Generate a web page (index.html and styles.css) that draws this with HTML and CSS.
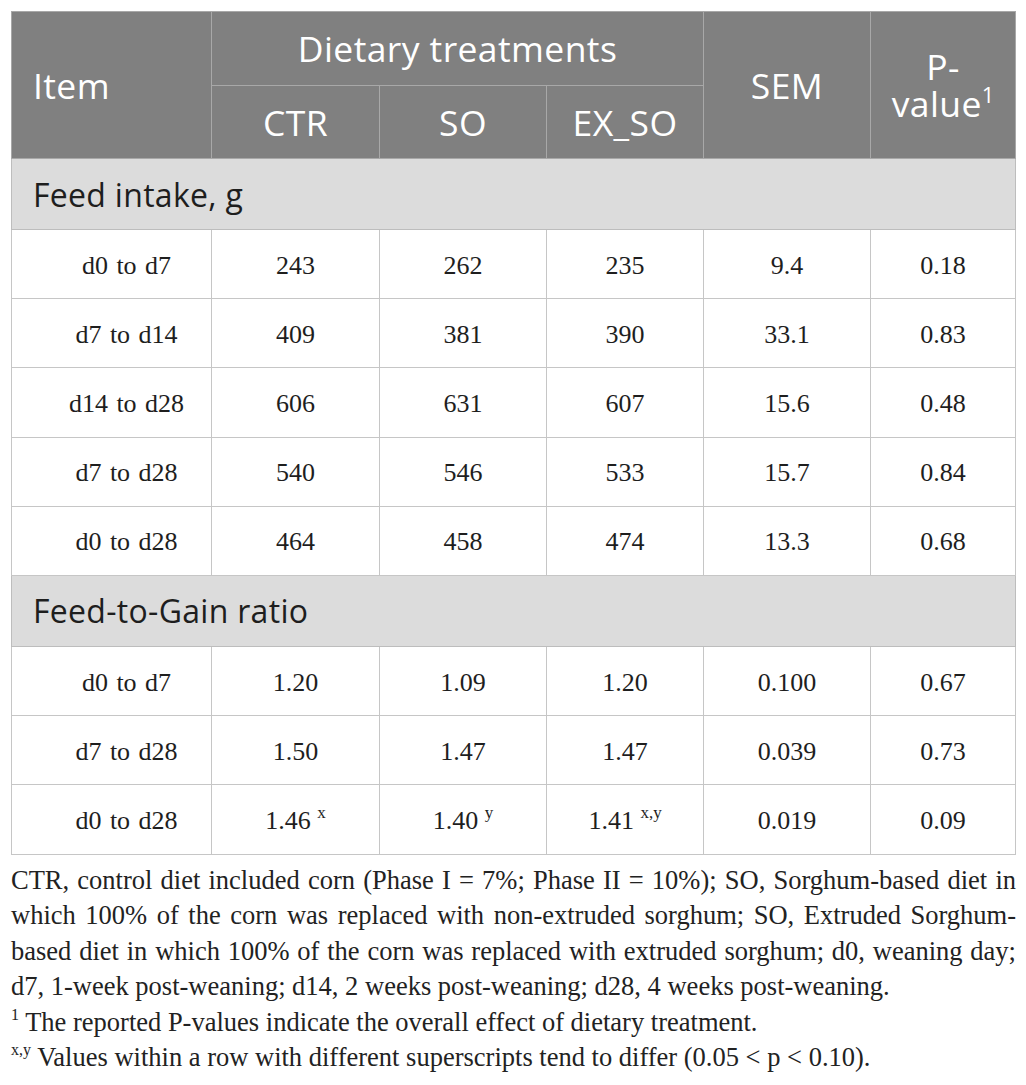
FILE: index.html
```html
<!DOCTYPE html>
<html lang="en">
<head>
<meta charset="utf-8">
<title>Feed intake and feed-to-gain ratio</title>
<link rel="stylesheet" href="styles.css">
</head>
<body>
<div class="page">
  <table class="results">
    <colgroup>
      <col class="w-item">
      <col class="w-ctr">
      <col class="w-so">
      <col class="w-ex">
      <col class="w-sem">
      <col class="w-p">
    </colgroup>
    <thead>
      <tr class="head-top">
        <th rowspan="2" class="item-h">Item</th>
        <th colspan="3">Dietary treatments</th>
        <th rowspan="2">SEM</th>
        <th rowspan="2" class="p-h">P-<br>value<sup>1</sup></th>
      </tr>
      <tr class="head-sub">
        <th>CTR</th>
        <th>SO</th>
        <th>EX_SO</th>
      </tr>
    </thead>
    <tbody>
      <tr class="section"><td colspan="6">Feed intake, g</td></tr>
      <tr class="row"><td class="label">d0 to d7</td><td>243</td><td>262</td><td>235</td><td>9.4</td><td>0.18</td></tr>
      <tr class="row"><td class="label">d7 to d14</td><td>409</td><td>381</td><td>390</td><td>33.1</td><td>0.83</td></tr>
      <tr class="row"><td class="label">d14 to d28</td><td>606</td><td>631</td><td>607</td><td>15.6</td><td>0.48</td></tr>
      <tr class="row"><td class="label">d7 to d28</td><td>540</td><td>546</td><td>533</td><td>15.7</td><td>0.84</td></tr>
      <tr class="row"><td class="label">d0 to d28</td><td>464</td><td>458</td><td>474</td><td>13.3</td><td>0.68</td></tr>
      <tr class="section"><td colspan="6">Feed-to-Gain ratio</td></tr>
      <tr class="row"><td class="label">d0 to d7</td><td>1.20</td><td>1.09</td><td>1.20</td><td>0.100</td><td>0.67</td></tr>
      <tr class="row"><td class="label">d7 to d28</td><td>1.50</td><td>1.47</td><td>1.47</td><td>0.039</td><td>0.73</td></tr>
      <tr class="row"><td class="label">d0 to d28</td><td>1.46 <sup>x</sup></td><td>1.40 <sup>y</sup></td><td>1.41 <sup>x,y</sup></td><td>0.019</td><td>0.09</td></tr>
    </tbody>
  </table>

  <div class="notes">
    <p class="para">
      <span class="line">CTR, control diet included corn (Phase I = 7%; Phase II = 10%); SO, Sorghum-based diet in</span>
      <span class="line">which 100% of the corn was replaced with non-extruded sorghum; SO, Extruded Sorghum-</span>
      <span class="line">based diet in which 100% of the corn was replaced with extruded sorghum; d0, weaning day;</span>
      <span class="line last">d7, 1-week post-weaning; d14, 2 weeks post-weaning; d28, 4 weeks post-weaning.</span>
    </p>
    <p class="fn"><sup>1</sup> The reported P-values indicate the overall effect of dietary treatment.</p>
    <p class="fn"><sup>x,y</sup> Values within a row with different superscripts tend to differ (0.05 &lt; p &lt; 0.10).</p>
  </div>
</div>
</body>
</html>
```
FILE: styles.css
```css
html, body {
  margin: 0;
  padding: 0;
  background: #ffffff;
}

.page {
  padding: 11px 0 0 11px;
  width: 1005px;
}

.results {
  border-collapse: collapse;
  table-layout: fixed;
  width: 1005px;
  border: 1px solid #bdbdbd;
}

.w-item { width: 200px; }
.w-ctr { width: 168px; }
.w-so { width: 167px; }
.w-ex { width: 157px; }
.w-sem { width: 167px; }
.w-p { width: 145px; }

.results th {
  background: #808080;
  color: #ffffff;
  font-family: "Open Sans", "Noto Sans", sans-serif;
  font-weight: 400;
  font-size: 35.5px;
  letter-spacing: 0.4px;
  text-align: center;
  vertical-align: middle;
  border: 1px solid #a8a8a8;
  padding: 0;
  line-height: 37px;
}

.head-top { height: 74px; }
.head-sub { height: 73px; }

.results th.item-h {
  text-align: left;
  padding-left: 21px;
}

.results th sup {
  font-size: 22px;
  line-height: 0;
  vertical-align: 14px;
  letter-spacing: 0;
}

.section td {
  background: #dcdcdc;
  color: #1e1e1e;
  font-family: "Open Sans", "Noto Sans", sans-serif;
  font-size: 32px;
  letter-spacing: 0.3px;
  height: 70px;
  padding: 0 0 0 21px;
  border: 1px solid #bdbdbd;
  vertical-align: middle;
}

.row td {
  height: 65.2px;
  border: 1px solid #c6c6c6;
  text-align: center;
  vertical-align: middle;
  font-family: "Liberation Serif", "Times New Roman", serif;
  font-size: 26px;
  color: #1e1e1e;
  padding: 3px 0 0 0;
}

.row td.label {
  padding-left: 30px;
  word-spacing: 2px;
}

.row td sup {
  font-size: 17px;
  line-height: 0;
  vertical-align: 11px;
}

.notes {
  margin-top: 8px;
  font-family: "Liberation Serif", "Times New Roman", serif;
  font-size: 26.5px;
  line-height: 35.6px;
  color: #222222;
}

.notes p {
  margin: 0;
}

.para .line {
  display: block;
  white-space: nowrap;
  text-align: justify;
  text-align-last: justify;
}

.para .line.last {
  text-align-last: left;
}

.fn sup {
  font-size: 16px;
  line-height: 0;
  vertical-align: 11px;
}
```
